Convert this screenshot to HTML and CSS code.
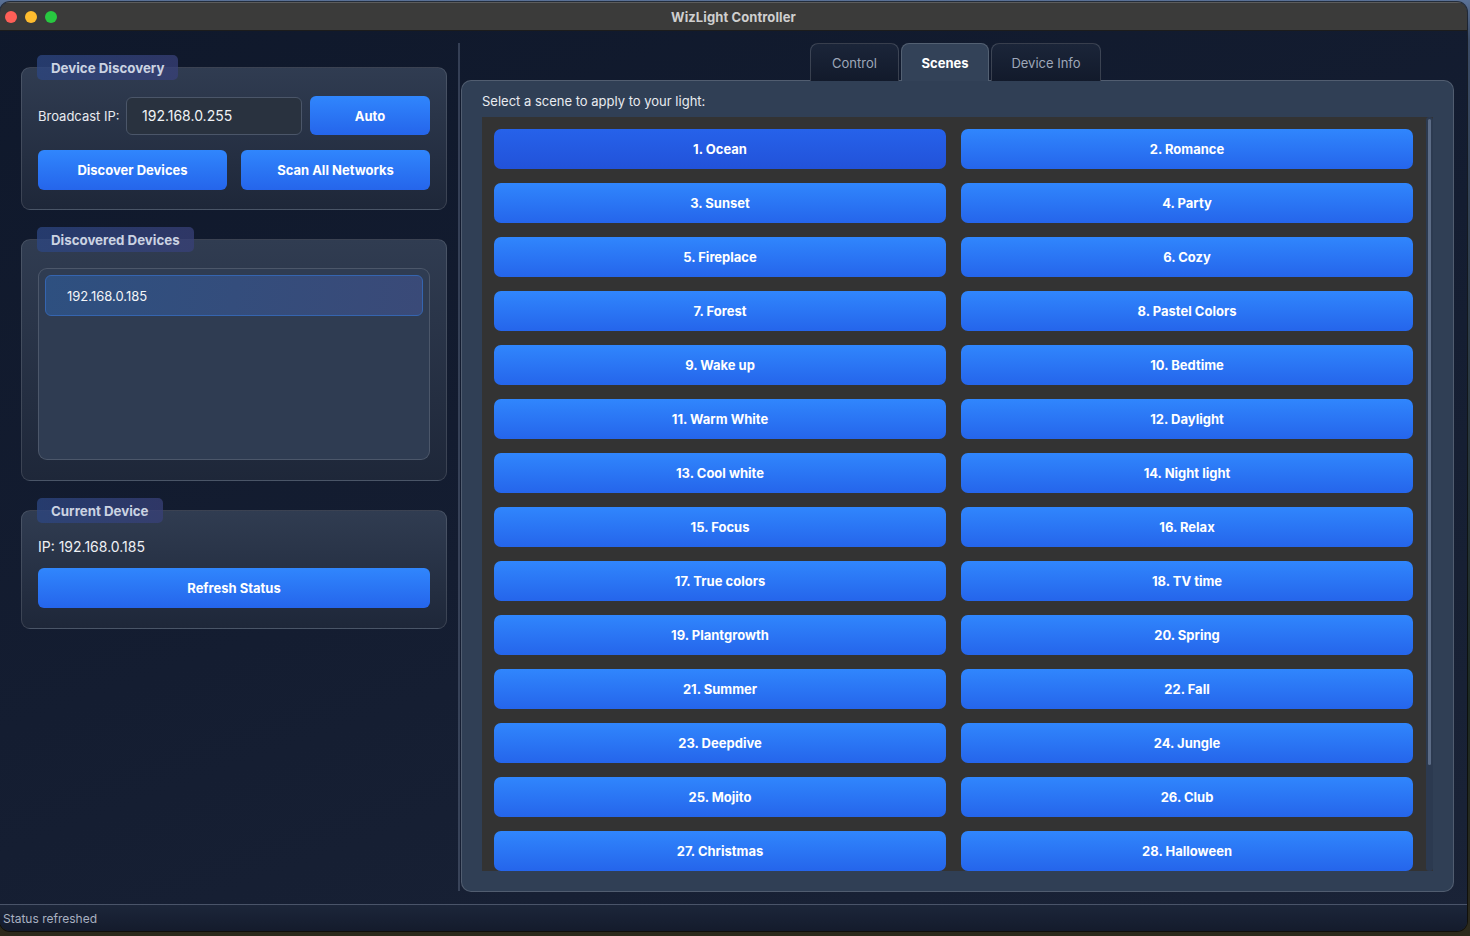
FILE: index.html
```html
<!DOCTYPE html>
<html lang="en">
<head>
<meta charset="utf-8">
<title>WizLight Controller</title>
<link rel="stylesheet" href="styles.css">
</head>
<body>
<div class="window">
  <div class="titlebar">
    <div class="lights">
      <span class="light red"></span>
      <span class="light yellow"></span>
      <span class="light green"></span>
    </div>
    <div class="title">WizLight Controller</div>
  </div>
  <div class="main">
    <div class="left">
      <section class="group g-discovery">
        <div class="legend">Device Discovery</div>
        <div class="row ip-row">
          <span class="label">Broadcast IP:</span>
          <div class="input">192.168.0.255</div>
          <button class="btn btn-auto">Auto</button>
        </div>
        <div class="row btn-row">
          <button class="btn">Discover Devices</button>
          <button class="btn">Scan All Networks</button>
        </div>
      </section>
      <section class="group g-devices">
        <div class="legend">Discovered Devices</div>
        <div class="listbox">
          <div class="list-item selected">192.168.0.185</div>
        </div>
      </section>
      <section class="group g-current">
        <div class="legend">Current Device</div>
        <div class="ip-text">IP: 192.168.0.185</div>
        <button class="btn btn-full">Refresh Status</button>
      </section>
    </div>
    <div class="vsep"></div>
    <div class="tabwidget">
      <div class="tabbar">
        <div class="tab">Control</div>
        <div class="tab active">Scenes</div>
        <div class="tab">Device Info</div>
      </div>
      <div class="pane">
        <div class="pane-label">Select a scene to apply to your light:</div>
        <div class="scroll">
          <div class="scene-grid">
            <button class="scene pressed">1. Ocean</button>
            <button class="scene">2. Romance</button>
            <button class="scene">3. Sunset</button>
            <button class="scene">4. Party</button>
            <button class="scene">5. Fireplace</button>
            <button class="scene">6. Cozy</button>
            <button class="scene">7. Forest</button>
            <button class="scene">8. Pastel Colors</button>
            <button class="scene">9. Wake up</button>
            <button class="scene">10. Bedtime</button>
            <button class="scene">11. Warm White</button>
            <button class="scene">12. Daylight</button>
            <button class="scene">13. Cool white</button>
            <button class="scene">14. Night light</button>
            <button class="scene">15. Focus</button>
            <button class="scene">16. Relax</button>
            <button class="scene">17. True colors</button>
            <button class="scene">18. TV time</button>
            <button class="scene">19. Plantgrowth</button>
            <button class="scene">20. Spring</button>
            <button class="scene">21. Summer</button>
            <button class="scene">22. Fall</button>
            <button class="scene">23. Deepdive</button>
            <button class="scene">24. Jungle</button>
            <button class="scene">25. Mojito</button>
            <button class="scene">26. Club</button>
            <button class="scene">27. Christmas</button>
            <button class="scene">28. Halloween</button>
          </div>
          <div class="vscroll"><div class="thumb"></div></div>
        </div>
      </div>
    </div>
  </div>
  <div class="statusbar">Status refreshed</div>
</div>
</body>
</html>
```

FILE: styles.css
```css
* { box-sizing: border-box; }
html, body { margin: 0; padding: 0; }
body {
  width: 1470px;
  height: 936px;
  overflow: hidden;
  font-family: Inter, "Noto Sans", "Liberation Sans", sans-serif;
  background: linear-gradient(180deg, #5a7196 0px, #3b4b66 40px, #1d2a22 700px, #2d2a1c 936px);
}
.window {
  margin-top: 2px;
  width: 1467px;
  height: 929px;
  border-radius: 10px;
  overflow: hidden;
  display: flex;
  flex-direction: column;
  background: linear-gradient(160deg, #0f182b 0%, #141d31 50%, #1a2337 100%);
  box-shadow: 0 0 0 1px rgba(0,0,0,0.6);
}
.titlebar {
  height: 29px;
  flex: 0 0 29px;
  background: #3b3b3a;
  border-top: 1px solid #5c5c5c;
  border-bottom: 1px solid #1c1c1c;
  display: flex;
  align-items: center;
  position: relative;
}
.lights { display: flex; gap: 8px; padding-left: 5px; }
.light { width: 12px; height: 12px; border-radius: 50%; display: block; }
.red { background: #fe5f57; }
.yellow { background: #febc2e; }
.green { background: #28c840; }
.title {
  position: absolute;
  left: 0; right: 0;
  text-align: center;
  font-size: 13px;
  font-weight: 700;
  color: #cfcfcf;
  letter-spacing: 0.1px;
}
.main {
  flex: 1;
  display: flex;
  padding: 12px 13px 12px 21px;
}
.left {
  width: 426px;
  flex: 0 0 426px;
  padding-top: 24px;
  display: flex;
  flex-direction: column;
  gap: 29px;
}
.group {
  position: relative;
  border: 1px solid rgba(255,255,255,0.13);
  border-radius: 9px;
  background: linear-gradient(180deg, #303c51 0%, #1e2739 100%);
  padding: 0 16px;
}
.legend {
  position: absolute;
  top: -13px;
  left: 15px;
  height: 25px;
  padding: 0 14px;
  border-radius: 5px;
  background: linear-gradient(90deg, rgba(44,70,130,0.75), rgba(56,64,120,0.75));
  color: #cbd3e2;
  font-size: 13.3px;
  font-weight: 700;
  display: flex;
  align-items: center;
}
.g-discovery { padding-top: 28px; padding-bottom: 19px; }
.row { display: flex; align-items: center; }
.ip-row { height: 39px; }
.label { font-size: 13px; color: #e8ebf0; width: 88px; flex: 0 0 88px; }
.input {
  width: 176px;
  height: 38px;
  border: 1px solid #4b5669;
  border-radius: 6px;
  background: #29323f;
  color: #f0f2f5;
  font-size: 14px;
  display: flex;
  align-items: center;
  padding-left: 15px;
}
.btn {
  font-family: inherit;
  border: none;
  border-radius: 6px;
  background: linear-gradient(180deg, #3086fd 0%, #2565eb 100%);
  color: #ffffff;
  font-size: 13px;
  font-weight: 700;
  height: 40px;
  padding: 0;
}
.btn-auto { width: 120px; height: 39px; margin-left: 8px; }
.btn-row { margin-top: 15px; gap: 14px; }
.btn-row .btn { flex: 1; }
.g-devices { padding-top: 28px; padding-bottom: 20px; }
.listbox {
  height: 192px;
  border: 1px solid rgba(255,255,255,0.14);
  border-radius: 9px;
  background: #2f3c52;
  padding: 6px;
}
.list-item {
  height: 41px;
  border-radius: 6px;
  font-size: 13px;
  color: #f3f5f8;
  display: flex;
  align-items: center;
  padding-left: 21px;
}
.list-item.selected {
  border: 1px solid #3565b0;
  background: linear-gradient(100deg, #2e5080 0%, #3a4a78 100%);
}
.g-current { padding-top: 26px; padding-bottom: 20px; }
.ip-text { font-size: 14px; color: #eef0f4; height: 19px; line-height: 19px; }
.btn-full { width: 100%; margin-top: 12px; font-size: 13px; }
.vsep {
  width: 2px;
  flex: 0 0 2px;
  margin-left: 11px;
  background: rgba(120,135,160,0.35);
  height: 848px;
}
.tabwidget {
  flex: 1;
  display: flex;
  flex-direction: column;
  margin-left: 1px;
}
.tabbar {
  display: flex;
  justify-content: center;
  gap: 2px;
  height: 37px;
  padding-right: 4px;
}
.tab {
  height: 38px;
  border: 1px solid rgba(255,255,255,0.16);
  border-bottom: none;
  border-radius: 8px 8px 0 0;
  background: linear-gradient(180deg, #1b2539 0%, #121a2b 100%);
  color: #9ea7b8;
  font-size: 13px;
  display: flex;
  align-items: center;
  justify-content: center;
  position: relative;
  z-index: 1;
}
.tab:nth-child(1) { width: 89px; }
.tab:nth-child(2) { width: 88px; }
.tab:nth-child(3) { width: 110px; }
.tab.active {
  background: #334258;
  color: #ffffff;
  font-weight: 700;
  z-index: 2;
}
.pane {
  flex: 1;
  border: 1px solid rgba(255,255,255,0.16);
  border-radius: 10px;
  background: #303f55;
  padding: 0 20px 19px 20px;
  display: flex;
  flex-direction: column;
}
.pane-label {
  font-size: 13px;
  color: #e8ebf0;
  height: 36px;
  line-height: 41px;
}
.scroll {
  height: 754px;
  background: #333333;
  overflow: hidden;
  display: flex;
}
.scene-grid {
  flex: 1;
  display: grid;
  grid-template-columns: 452px 452px;
  grid-auto-rows: 40px;
  column-gap: 15px;
  row-gap: 14px;
  padding: 12px 13px 0 12px;
}
.vscroll {
  width: 7px;
  flex: 0 0 7px;
  background: #2c3a50;
  border-radius: 3px;
  padding: 2px 2px 0 2px;
}
.thumb {
  height: 646px;
  border-radius: 2px;
  background: #5c6c86;
}
.scene {
  font-family: inherit;
  height: 40px;
  border: none;
  border-radius: 7px;
  background: linear-gradient(180deg, #3086fd 0%, #2565eb 100%);
  color: #ffffff;
  font-size: 13px;
  font-weight: 700;
  padding: 0;
}
.scene.pressed { background: linear-gradient(180deg, #2662ea 0%, #2252d9 100%); }
.statusbar {
  height: 27px;
  flex: 0 0 27px;
  border-top: 1px solid rgba(140,155,180,0.45);
  background: linear-gradient(180deg, #1c263a 0%, #141b2c 100%);
  color: #a9b1c1;
  font-size: 12px;
  display: flex;
  align-items: center;
  padding-left: 3px;
}
```
